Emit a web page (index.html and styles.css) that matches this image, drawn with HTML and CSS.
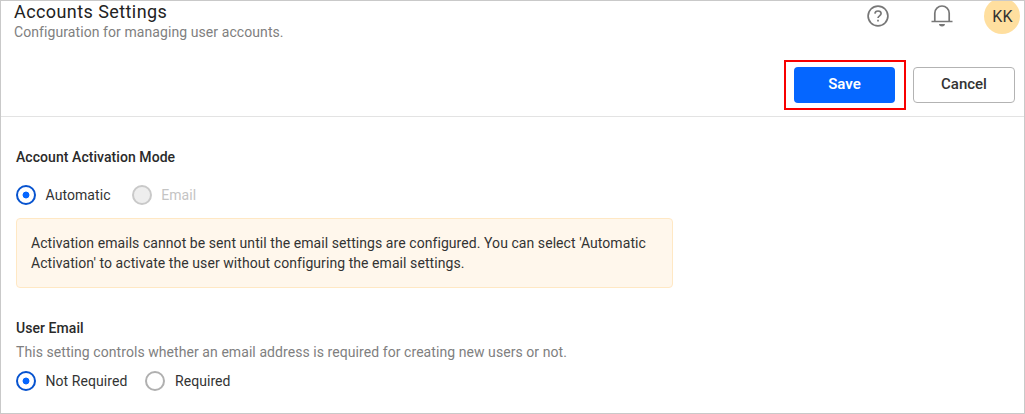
FILE: index.html
```
<!DOCTYPE html>
<html lang="en">
<head>
<meta charset="utf-8">
<title>Accounts Settings</title>
<link rel="stylesheet" href="styles.css">
</head>
<body>
<div class="page">
  <header class="header">
    <div class="top">
      <div class="heading">
        <h1 class="title">Accounts Settings</h1>
        <p class="subtitle">Configuration for managing user accounts.</p>
      </div>
      <div class="tools">
        <svg class="help" width="22" height="22" viewBox="0 0 22 22" fill="none" stroke="#777" stroke-width="1.7"><circle cx="11" cy="11" r="9.9"/><path d="M7.900 8.700c.2-1.800 1.400-2.700 3.100-2.700 1.800 0 3.100 1 3.100 2.600 0 2.300-3.100 2.300-3.100 4.500M11 14.700v1.900"/></svg>
        <svg class="bell" width="22" height="23" viewBox="0 0 22 23" fill="none" stroke="#777" stroke-width="1.7"><path d="M.5 16.500h21M3.800 16.500V8.200a7.200 7.200 0 0 1 14.400 0v8.300"/><path d="M8 19h6c-.3 1.800-1.300 2.500-3 2.500S8.300 20.800 8 19z" fill="#777" stroke="none"/></svg>
        <div class="avatar">KK</div>
      </div>
    </div>
    <div class="actions">
      <div class="highlight"><button class="btn save">Save</button></div>
      <button class="btn cancel">Cancel</button>
    </div>
  </header>
  <main class="content">
    <h2 class="label">Account Activation Mode</h2>
    <div class="options mode">
      <label class="option"><span class="radio checked"></span>Automatic</label>
      <label class="option disabled"><span class="radio"></span>Email</label>
    </div>
    <div class="notice">Activation emails cannot be sent until the email settings are configured. You can select 'Automatic<br>Activation' to activate the user without configuring the email settings.</div>
    <h2 class="label user">User Email</h2>
    <p class="hint">This setting controls whether an email address is required for creating new users or not.</p>
    <div class="options required">
      <label class="option"><span class="radio checked"></span>Not Required</label>
      <label class="option"><span class="radio"></span>Required</label>
    </div>
  </main>
</div>
</body>
</html>
```
FILE: styles.css
```
* { box-sizing: border-box; }
body { margin: 0; font-family: Roboto, sans-serif; color: #333; background: #fff; }
h1, h2, p { margin: 0; }
.page { width: 1025px; height: 414px; border: 1px solid #c9c9c9; overflow: hidden; }
.header { height: 116px; border-bottom: 1px solid #e3e3e3; }
.top { display: flex; justify-content: space-between; height: 59px; padding-left: 13px; }
.title { font-size: 18px; line-height: 22px; font-weight: 450; letter-spacing: .42px; color: #222; }
.subtitle { font-size: 14px; line-height: 18px; color: #808080; letter-spacing: .08px; }
.tools { display: flex; align-items: flex-start; padding-right: 4px; }
.help { margin: 4px 42px 0 0; }
.bell { margin: 4px 31px 0 0; }
.avatar { width: 36px; height: 36px; margin-top: -3px; border-radius: 50%; background: #ffdf9f; font-size: 16px; font-weight: 450; line-height: 37px; text-align: center; letter-spacing: .3px; padding-left: 1px; }
.actions { display: flex; justify-content: flex-end; align-items: center; gap: 7px; padding-right: 9px; }
.highlight { width: 122px; height: 50px; border: 2px solid #f80000; display: flex; align-items: center; padding-left: 8px; }
.btn { font: 500 15px/20px Roboto, sans-serif; padding: 0 0 2px; height: 36px; border-radius: 4px; }
.save { width: 101px; border: 0; background: #0566ff; color: #fff; font-weight: 600; }
.cancel { width: 102px; border: 1px solid #b3b3b3; background: #fff; color: #333; }
.content { padding: 30px 15px 0; font-size: 14px; line-height: 20px; }
.label { font-size: 14px; line-height: 20px; font-weight: 500; letter-spacing: .06px; color: #2a2a2a; }
.options { display: flex; letter-spacing: .07px; }
.option { display: flex; align-items: center; gap: 9.5px; }
.mode { margin-top: 18px; gap: 21.8px; }
.required { margin-top: 9px; gap: 18px; }
.mode .disabled { gap: 8.8px; }
.radio { width: 20px; height: 20px; border: 2px solid #b0b0b0; border-radius: 50%; }
.checked { border-color: #0753cf; background: radial-gradient(circle, #0566ff 0 3px, transparent 3.8px); }
.disabled { color: #c4c4c4; }
.disabled .radio { border-color: #c9c9c9; background: #eee; }
.notice { width: 657px; height: 70px; margin-top: 13px; padding: 14px; border: 1px solid #ffe8c4; border-radius: 4px; background: #fff7ec; letter-spacing: .067px; }
.user { margin-top: 30px; }
.hint { margin-top: 4px; color: #808080; letter-spacing: .067px; }
```
